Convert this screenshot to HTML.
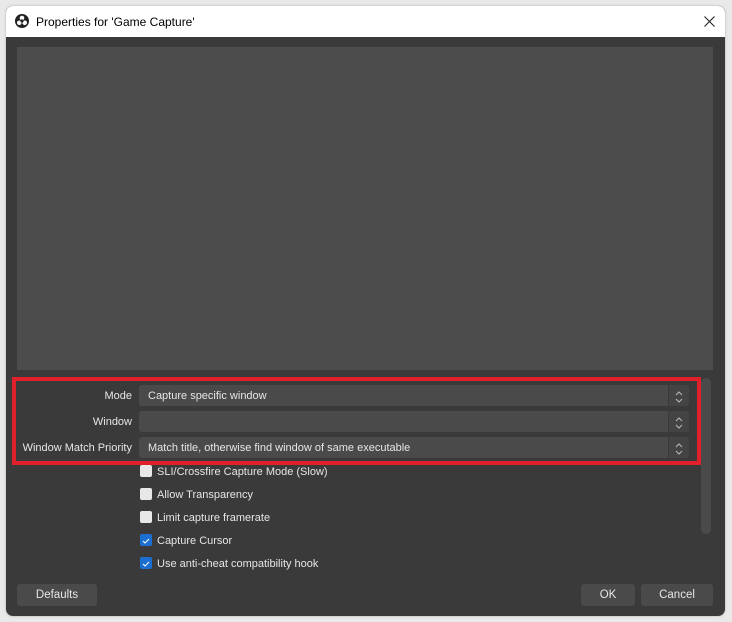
<!DOCTYPE html>
<html><head><style>
body{margin:0;width:732px;height:622px;background:#e9e9e9;position:relative;overflow:hidden;font-family:"Liberation Sans",sans-serif;}
.win{position:absolute;left:6px;top:6px;width:719px;height:610px;border-radius:7px;overflow:hidden;background:#3a3a3a;box-shadow:0 0 2px #aaa;}
.title{position:absolute;left:0;top:0;width:100%;height:31px;background:#fff;color:#000;font-size:12px;}
.title span{position:absolute;left:30px;top:9px;}
.pv{position:absolute;left:11px;top:41px;width:696px;height:323px;background:#4c4c4c;}
.t{position:absolute;color:#e6e6e6;font-size:11px;white-space:nowrap;}
.lbl{text-align:right;width:124px;left:2px;}
.cb{position:absolute;left:133px;top:0;height:21px;background:#4a4a4a;border-radius:3px;width:550px;}
.cb .sp{position:absolute;right:0;top:0;width:20px;height:21px;background:#444;border-left:1px solid #3a3a3a;border-radius:0 3px 3px 0;}
.chk{position:absolute;left:134px;width:12px;height:12px;border-radius:2px;background:#e8e8e8;}
.chk.on{background:#1c6fd1;}
.btn{position:absolute;top:578px;height:22px;background:#4a4a4a;border-radius:3px;color:#e6e6e6;font-size:11.5px;text-align:center;line-height:22px;}
</style></head><body>
<div class="win">
<div class="title">
<svg style="position:absolute;left:9px;top:8px" width="14" height="14" viewBox="0 0 14 14"><circle cx="7" cy="7" r="7" fill="#222"/><circle cx="7" cy="4" r="2.3" fill="#fff"/><circle cx="4.3" cy="8.8" r="2.3" fill="#fff"/><circle cx="9.7" cy="8.8" r="2.3" fill="#fff"/><circle cx="7" cy="7" r="1.6" fill="#222"/></svg>
<span>Properties for 'Game Capture'</span>
<svg style="position:absolute;left:698px;top:10px" width="11" height="11" viewBox="0 0 11 11"><path d="M0.5 0.5L10.5 10.5M10.5 0.5L0.5 10.5" stroke="#222" stroke-width="1.1"/></svg>
</div>
<div class="pv"></div>
<div style="position:absolute;left:695px;top:372px;width:10px;height:156px;background:#4a4a4a;border-radius:5px"></div>
<div style="position:absolute;left:6px;top:371px;width:681px;height:80px;border:4px solid #e0202a;"></div>
<div style="position:absolute;left:0;top:379px;width:700px;height:21px"><div class="t lbl" style="top:5px">Mode</div><div class="cb"><div class="t" style="left:9px;top:5px">Capture specific window</div><div class="sp"></div></div></div>
<div style="position:absolute;left:0;top:405px;width:700px;height:21px"><div class="t lbl" style="top:5px">Window</div><div class="cb"><div class="sp"></div></div></div>
<div style="position:absolute;left:0;top:431px;width:700px;height:21px"><div class="t lbl" style="top:5px">Window Match Priority</div><div class="cb"><div class="t" style="left:9px;top:5px">Match title, otherwise find window of same executable</div><div class="sp"></div></div></div>
<svg style="position:absolute;left:668px;top:383px" width="10" height="70" viewBox="0 0 10 70"><g fill="none" stroke="#bbb" stroke-width="1"><path d="M2 6L5 3L8 6M2 10L5 13L8 10"/><path d="M2 32L5 29L8 32M2 36L5 39L8 36"/><path d="M2 58L5 55L8 58M2 62L5 65L8 62"/></g></svg>
<div class="chk" style="top:459px"></div><div class="t" style="left:151px;top:460px">SLI/Crossfire Capture Mode (Slow)</div>
<div class="chk" style="top:482px"></div><div class="t" style="left:151px;top:483px">Allow Transparency</div>
<div class="chk" style="top:505px"></div><div class="t" style="left:151px;top:506px">Limit capture framerate</div>
<div class="chk on" style="top:528px"><svg width="12" height="12"><path d="M3 6L5 8L9 4" stroke="#fff" fill="none"/></svg></div><div class="t" style="left:151px;top:529px">Capture Cursor</div>
<div class="chk on" style="top:551px"><svg width="12" height="12"><path d="M3 6L5 8L9 4" stroke="#fff" fill="none"/></svg></div><div class="t" style="left:151px;top:552px">Use anti-cheat compatibility hook</div>
<div class="btn" style="left:11px;width:80px">Defaults</div>
<div class="btn" style="left:575px;width:54px">OK</div>
<div class="btn" style="left:635px;width:72px">Cancel</div>
</div>
</body></html>
